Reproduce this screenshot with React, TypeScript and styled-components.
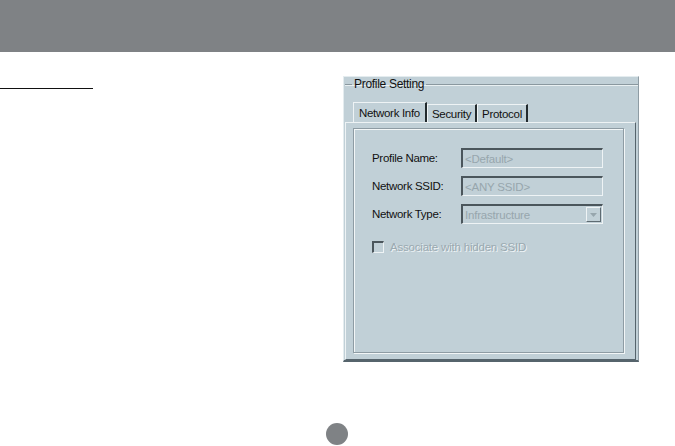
import styled, { createGlobalStyle } from "styled-components";

const Global = createGlobalStyle`
    html, body {
        margin:0;
        padding:0;
        background:#ffffff;
    }
    body {
        width:675px;
        height:446px;
        overflow:hidden;
        font-family:"Liberation Sans", Arial, sans-serif;
    }
`;

const Header = styled.div`
    height:52px;
    background-color:#7f8285;
`;

const Main = styled.div`
    display:flex;
    flex-direction:row;
    padding-top:24px;
`;

const LeftCol = styled.div`
    width:343px;
`;

const Rule = styled.div`
    margin-top:12px;
    width:93px;
    border-top:1px solid #111;
`;

const Dialog = styled.div`
    width:296px;
    height:286px;
    box-sizing:border-box;
    background-color:#c1d0d7;
    border-top:1px solid #e4ecef;
    border-left:1px solid #e4ecef;
    border-right:1px solid #8e9ca4;
    border-bottom:2px solid #56646c;
    padding:1px 0 0 1px;
    font-size:11px;
    color:#111;
`;

const Group = styled.fieldset`
    margin:0;
    padding:0;
    border:none;
    border-top:1px solid #8a989f;
    box-shadow:inset 0 1px 0 #e9f0f2;
    legend {
        padding:0 2px;
        margin-left:7px;
        font-size:12px;
        line-height:12px;
        letter-spacing:-0.3px;
    }
`;

const Tabs = styled.div`
    display:flex;
    flex-direction:row;
    align-items:flex-end;
    padding-left:8px;
    margin-top:12px;
    height:20px;
`;

const Tab = styled.div<{ $active?: boolean }>`
    height:${p => (p.$active ? "20px" : "18px")};
    box-sizing:border-box;
    padding:0 ${p => (p.$active ? "5px" : "4px")};
    border-top:1px solid #eef3f5;
    border-left:1px solid #eef3f5;
    border-right:2px solid #222a2e;
    display:flex;
    align-items:center;
    font-size:11.5px;
    letter-spacing:-0.3px;
    white-space:nowrap;
`;

const Page = styled.div`
    height:238px;
    box-sizing:border-box;
    border-top:1px solid #eef3f5;
    border-left:1px solid #eef3f5;
    border-right:1px solid #56646c;
    border-bottom:1px solid #56646c;
    margin-right:2px;
    padding:5px 11px 6px 7px;
`;

const Inner = styled.div`
    height:100%;
    box-sizing:border-box;
    border:1px solid #8e9ca4;
    box-shadow:1px 1px 0 #f2f6f7, inset 1px 1px 0 #f2f6f7;
    padding:19px 0 0 18px;
    display:flex;
    flex-direction:column;
`;

const Row = styled.div`
    display:flex;
    flex-direction:row;
    align-items:center;
    height:20px;
    margin-bottom:8px;
`;

const Label = styled.div`
    width:89px;
    font-size:11.5px;
    letter-spacing:-0.3px;
`;

const Field = styled.div`
    position:relative;
    width:142px;
    height:20px;
    box-sizing:border-box;
    border-top:2px solid #4b565c;
    border-left:2px solid #4b565c;
    border-right:1px solid #eef3f5;
    border-bottom:1px solid #eef3f5;
    padding-left:2px;
    display:flex;
    align-items:center;
    color:#97a6ad;
    font-size:11.5px;
    letter-spacing:-0.2px;
`;

const DropButton = styled.div`
    position:absolute;
    right:1px;
    top:1px;
    width:15px;
    height:15px;
    box-sizing:border-box;
    border-top:1px solid #eef3f5;
    border-left:1px solid #eef3f5;
    border-right:1px solid #5e6b72;
    border-bottom:1px solid #5e6b72;
    display:flex;
    align-items:center;
    justify-content:center;
`;

const Check = styled.div`
    display:flex;
    flex-direction:row;
    align-items:center;
    margin-top:9px;
    color:#9aa9b0;
    text-shadow:1px 1px 0 #eef3f5;
    font-size:11.5px;
    letter-spacing:-0.2px;
    span.box {
        width:12px;
        height:12px;
        box-sizing:border-box;
        border-top:2px solid #4b565c;
        border-left:2px solid #4b565c;
        border-right:1px solid #eef3f5;
        border-bottom:1px solid #eef3f5;
        margin-right:6px;
    }
`;

const Dot = styled.div`
    width:22px;
    height:22px;
    border-radius:50%;
    background-color:#7f8285;
    margin:61px auto 0 auto;
    position:relative;
    left:-1px;
`;

export default function App() {
    return (
        <>
            <Global />
            <Header />
            <Main>
                <LeftCol>
                    <Rule />
                </LeftCol>
                <Dialog>
                    <Group>
                        <legend>Profile Setting</legend>
                    </Group>
                    <Tabs>
                        <Tab $active>Network Info</Tab>
                        <Tab>Security</Tab>
                        <Tab>Protocol</Tab>
                    </Tabs>
                    <Page>
                        <Inner>
                            <Row>
                                <Label>Profile Name:</Label>
                                <Field>&lt;Default&gt;</Field>
                            </Row>
                            <Row>
                                <Label>Network SSID:</Label>
                                <Field>&lt;ANY SSID&gt;</Field>
                            </Row>
                            <Row>
                                <Label>Network Type:</Label>
                                <Field>
                                    Infrastructure
                                    <DropButton>
                                        <svg width="7" height="4" viewBox="0 0 7 4">
                                            <path d="M0 0 L7 0 L3.5 4 Z" fill="#97a6ad" />
                                        </svg>
                                    </DropButton>
                                </Field>
                            </Row>
                            <Check>
                                <span className="box" />
                                Associate with hidden SSID
                            </Check>
                        </Inner>
                    </Page>
                </Dialog>
            </Main>
            <Dot />
        </>
    );
}
